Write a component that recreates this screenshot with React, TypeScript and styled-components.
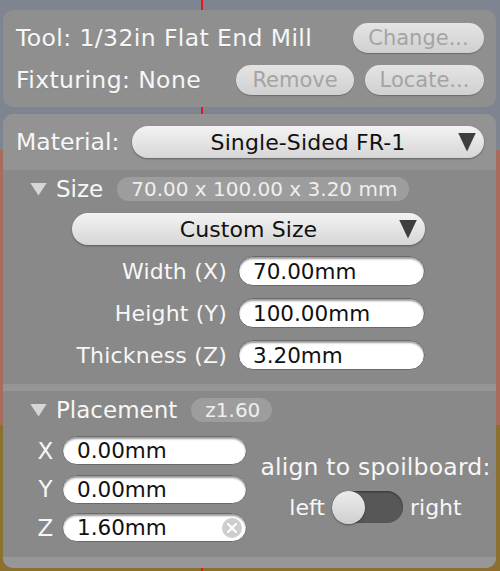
import React from "react";
import styled, { createGlobalStyle } from "styled-components";

const Global = createGlobalStyle`
  html, body { margin: 0; padding: 0; }
  body {
    width: 500px;
    height: 571px;
    overflow: hidden;
    font-family: "DejaVu Sans", "Lucida Grande", sans-serif;
    background:
      linear-gradient(to right, transparent 201px, #e8141c 201px, #e8141c 203px, transparent 203px),
      linear-gradient(to bottom, #7e8590 0, #7e8590 150px, #a86c5c 150px, #a86c5c 425px, #8c7030 425px);
  }
`;

const Root = styled.div`
  display: flex;
  flex-direction: column;
  gap: 7px;
  padding: 10px 4px 0 3px;
`;

const Panel = styled.div`
  background: #8f8f8f;
  border-radius: 10px;
  display: flex;
  flex-direction: column;
  overflow: hidden;
`;

const ToolPanel = styled(Panel)`
  padding: 13px 12px 12px 13px;
  gap: 12px;
`;

const Row = styled.div`
  display: flex;
  align-items: center;
  height: 30px;
`;

const Label = styled.div<{ $ls?: number }>`
  flex: 1;
  color: #f7f7f7;
  font-size: 23.5px;
  letter-spacing: ${(p) => p.$ls ?? 0.4}px;
  line-height: 28px;
  white-space: nowrap;
  text-shadow: 0 1px 0 rgba(0, 0, 0, 0.08);
`;

const ButtonGroup = styled.div`
  display: flex;
  gap: 11px;
`;

const PillButton = styled.button<{ $w: number }>`
  width: ${(p) => p.$w}px;
  height: 30px;
  border: none;
  border-radius: 15px;
  background: linear-gradient(#e4e4e4, #d0d0d0);
  box-shadow: 0 1px 1px rgba(0, 0, 0, 0.25);
  color: #a4a4a4;
  font-family: "DejaVu Sans", "Lucida Grande", sans-serif;
  font-size: 21px;
  padding: 0;
  text-align: center;
`;

const MaterialHeader = styled.div`
  display: flex;
  align-items: center;
  background: #939393;
  padding: 12px 12px 12px 13px;
`;

const Dropdown = styled.div<{ $w: number }>`
  width: ${(p) => p.$w}px;
  height: 32px;
  border-radius: 16px;
  background: linear-gradient(#f3f3f3, #d6d6d6);
  box-shadow: 0 1px 2px rgba(0, 0, 0, 0.35);
  display: grid;
  grid-template-columns: 26px 1fr 26px;
  align-items: center;
  color: #111;
  font-size: 22px;
  letter-spacing: 0.1px;
`;

const DropText = styled.span`
  text-align: center;
  white-space: nowrap;
`;

const DropArrow = styled.span`
  width: 18px;
  height: 19px;
  background: #3e3e3e;
  clip-path: polygon(0 0, 100% 0, 50% 100%);
`;

const Section = styled.div<{ $pb: number }>`
  background: #898989;
  display: flex;
  flex-direction: column;
  padding: 7px 0 ${(p) => p.$pb}px;
`;

const SectionHeader = styled.div`
  display: flex;
  align-items: center;
  height: 24px;
  padding-left: 27px;
`;

const Disclosure = styled.span`
  width: 17px;
  height: 13px;
  background: #d6d6d6;
  clip-path: polygon(0 0, 100% 0, 50% 100%);
  margin-right: 9px;
`;

const SectionTitle = styled.span`
  color: #f7f7f7;
  font-size: 23px;
  line-height: 24px;
  margin-right: 14px;
`;

const Badge = styled.span`
  height: 24px;
  line-height: 24px;
  border-radius: 12px;
  background: #9d9d9d;
  color: #efefef;
  font-size: 20px;
  padding: 0 12px 0 14px;
  white-space: nowrap;
`;

const SizeForm = styled.div`
  align-self: center;
  margin-top: 12px;
  display: grid;
  grid-template-columns: 155px 187px;
  column-gap: 11px;
  row-gap: 12px;
  margin-left: -2px;
`;

const SizeDropdownCell = styled.div`
  grid-column: 1 / span 2;
  margin-bottom: -1px;
`;

const FormLabel = styled.div`
  color: #f7f7f7;
  font-size: 22px;
  letter-spacing: 0.2px;
  text-align: right;
  align-self: center;
  white-space: nowrap;
`;

const Field = styled.div<{ $h?: number }>`
  height: ${(p) => p.$h ?? 30}px;
  box-sizing: border-box;
  border-radius: 15px;
  background: #fff;
  border: 1px solid #6a6a6a;
  box-shadow: inset 0 2px 2px rgba(0, 0, 0, 0.4);
  display: flex;
  align-items: center;
  padding: 0 4px 0 14px;
`;

const FieldInput = styled.input`
  flex: 1;
  min-width: 0;
  border: none;
  outline: none;
  background: transparent;
  padding: 0;
  color: #111;
  font-family: "DejaVu Sans", "Lucida Grande", sans-serif;
  font-size: 21.5px;
`;

const Separator = styled.div`
  height: 7px;
  background: #959595;
`;

const PlacementBody = styled.div`
  margin-top: 14px;
  display: grid;
  grid-template-columns: 17px 185px 1fr;
  column-gap: 8px;
  row-gap: 9.5px;
  padding-left: 34px;
`;

const AxisLabel = styled.div`
  color: #f7f7f7;
  font-size: 23px;
  text-align: center;
  align-self: center;
`;

const AlignColumn = styled.div`
  grid-column: 3;
  grid-row: 1 / span 3;
  display: flex;
  flex-direction: column;
  align-items: center;
  justify-content: center;
  gap: 10px;
  color: #f7f7f7;
  font-size: 23.5px;
  letter-spacing: 0.2px;
  padding: 0 0 2px 0;
`;

const ToggleRow = styled.div`
  display: flex;
  align-items: center;
  gap: 7px;
  font-size: 22px;
  letter-spacing: 0;
`;

const Track = styled.div`
  width: 71px;
  height: 32px;
  border-radius: 16px;
  background: #575757;
  box-shadow: inset 0 1px 2px rgba(0, 0, 0, 0.4);
  display: flex;
  align-items: center;
`;

const Knob = styled.div`
  width: 33px;
  height: 33px;
  border-radius: 50%;
  background: linear-gradient(#ececec, #cfcfcf);
  box-shadow: 0 1px 2px rgba(0, 0, 0, 0.4);
`;

const BottomBand = styled.div`
  height: 11px;
  background: #979797;
`;

const ClearIcon = () => (
  <svg width="20" height="20" viewBox="0 0 20 20">
    <circle cx="10" cy="10" r="10" fill="#cdcdcd" />
    <path d="M6 6 L14 14 M14 6 L6 14" stroke="#fff" strokeWidth="2" strokeLinecap="round" />
  </svg>
);

const sizeRows = [
  { label: "Width (X)", value: "70.00mm" },
  { label: "Height (Y)", value: "100.00mm" },
  { label: "Thickness (Z)", value: "3.20mm" },
];

const placeRows = [
  { label: "X", value: "0.00mm", clear: false },
  { label: "Y", value: "0.00mm", clear: false },
  { label: "Z", value: "1.60mm", clear: true },
];

export default function App() {
  return (
    <>
      <Global />
      <Root>
        <ToolPanel>
          <Row>
            <Label>Tool: 1/32in Flat End Mill</Label>
            <PillButton $w={131} disabled>Change...</PillButton>
          </Row>
          <Row>
            <Label>Fixturing: None</Label>
            <ButtonGroup>
              <PillButton $w={118} disabled>Remove</PillButton>
              <PillButton $w={119} disabled>Locate...</PillButton>
            </ButtonGroup>
          </Row>
        </ToolPanel>
        <Panel>
          <MaterialHeader>
            <Label $ls={0}>Material:</Label>
            <Dropdown $w={352}>
              <span />
              <DropText>Single-Sided FR-1</DropText>
              <DropArrow />
            </Dropdown>
          </MaterialHeader>
          <Section $pb={14}>
            <SectionHeader>
              <Disclosure />
              <SectionTitle>Size</SectionTitle>
              <Badge>70.00 x 100.00 x 3.20 mm</Badge>
            </SectionHeader>
            <SizeForm>
              <SizeDropdownCell>
                <Dropdown $w={353}>
                  <span />
                  <DropText>Custom Size</DropText>
                  <DropArrow />
                </Dropdown>
              </SizeDropdownCell>
              {sizeRows.map((r) => (
                <React.Fragment key={r.label}>
                  <FormLabel>{r.label}</FormLabel>
                  <Field>
                    <FieldInput readOnly value={r.value} />
                  </Field>
                </React.Fragment>
              ))}
            </SizeForm>
          </Section>
          <Separator />
          <Section $pb={15}>
            <SectionHeader>
              <Disclosure />
              <SectionTitle>Placement</SectionTitle>
              <Badge>z1.60</Badge>
            </SectionHeader>
            <PlacementBody>
              {placeRows.map((r) => (
                <React.Fragment key={r.label}>
                  <AxisLabel>{r.label}</AxisLabel>
                  <Field $h={29}>
                    <FieldInput readOnly value={r.value} />
                    {r.clear && <ClearIcon />}
                  </Field>
                </React.Fragment>
              ))}
              <AlignColumn>
                <span>align to spoilboard:</span>
                <ToggleRow>
                  <span>left</span>
                  <Track>
                    <Knob />
                  </Track>
                  <span>right</span>
                </ToggleRow>
              </AlignColumn>
            </PlacementBody>
          </Section>
          <BottomBand />
        </Panel>
      </Root>
    </>
  );
}
